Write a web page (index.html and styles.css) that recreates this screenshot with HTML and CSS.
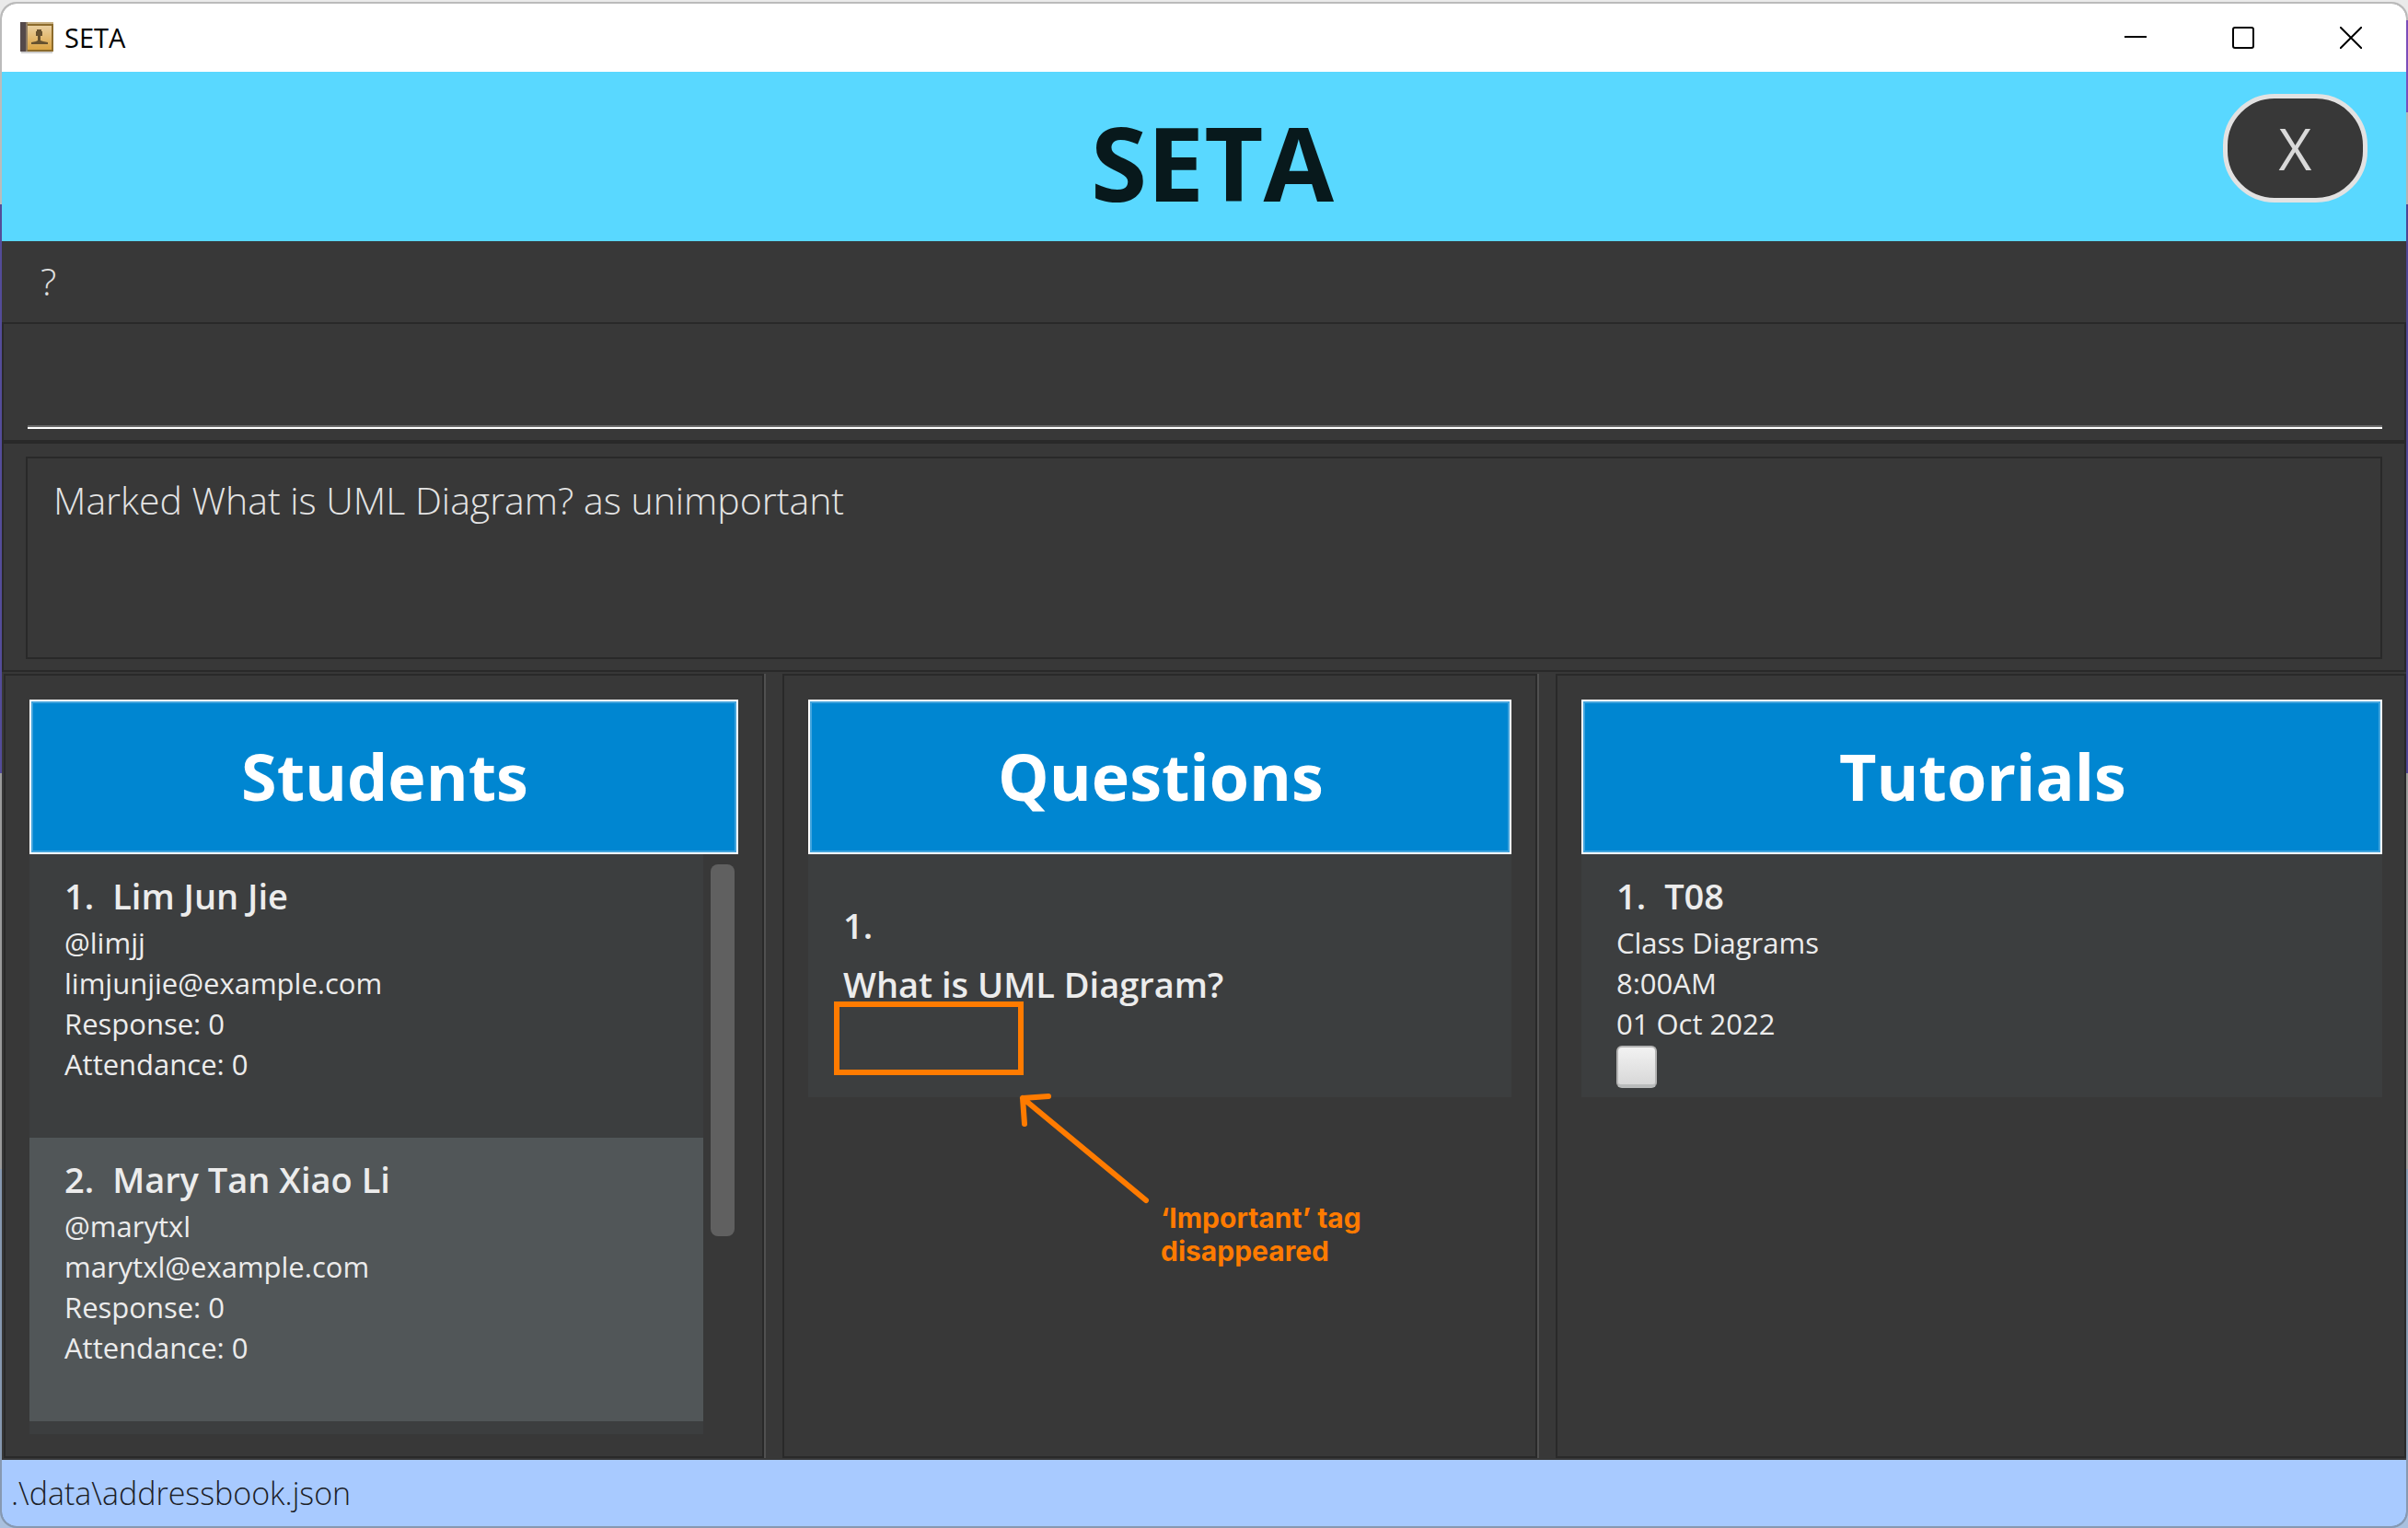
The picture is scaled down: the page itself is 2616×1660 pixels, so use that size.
FILE: index.html
```html
<!DOCTYPE html>
<html lang="en">
<head>
<meta charset="utf-8">
<title>SETA</title>
<link rel="stylesheet" href="styles.css">
</head>
<body>
<div class="window">
  <div class="titlebar">
    <svg class="app-icon" viewBox="0 0 36 34" aria-hidden="true">
      <defs>
        <linearGradient id="cover" x1="0" y1="0" x2="0" y2="1">
          <stop offset="0" stop-color="#e9cf9f"/>
          <stop offset="1" stop-color="#dba443"/>
        </linearGradient>
      </defs>
      <rect x="1" y="31" width="34" height="3" fill="#cfcfcf"/>
      <rect width="36" height="32" fill="#8c6b2c"/>
      <rect x="6" y="0" width="30" height="2" fill="#c9b183"/>
      <rect x="7" y="4" width="27" height="26" fill="url(#cover)"/>
      <rect width="6" height="32" fill="#54494a"/>
      <rect x="6" width="2" height="32" fill="#8c7a62"/>
      <path d="M18 8h5v2h1v5h-2v5l3 1 5 1v2H12v-2l5-1 2-1v-5h-2v-5h1z" fill="#66512f"/>
    </svg>
    <span class="app-name">SETA</span>
    <div class="window-controls">
      <button type="button" aria-label="Minimize"><svg viewBox="0 0 24 24"><path d="M0 11h24" stroke-width="2"/></svg></button>
      <button type="button" aria-label="Maximize"><svg viewBox="0 0 24 24"><rect x="1" y="1" width="22" height="22" rx="2" stroke-width="2"/></svg></button>
      <button type="button" aria-label="Close"><svg viewBox="0 0 24 24"><path d="M0 0l24 24M24 0L0 24" stroke-width="2"/></svg></button>
    </div>
  </div>

  <header class="banner">
    <h1>SETA</h1>
    <button type="button" class="exit">X</button>
  </header>

  <nav class="menubar"><button type="button">?</button></nav>

  <div class="command"><input type="text" aria-label="Command"></div>

  <div class="result"><output class="result-text">Marked What is UML Diagram? as unimportant</output></div>

  <main class="panels">
    <section class="panel">
      <h2>Students</h2>
      <div class="scroller">
        <ul class="list">
          <li class="card student">
            <h3><span>1.</span><span>Lim Jun Jie</span></h3>
            <p>@limjj</p>
            <p>limjunjie@example.com</p>
            <p>Response: 0</p>
            <p>Attendance: 0</p>
          </li>
          <li class="card student selected">
            <h3><span>2.</span><span>Mary Tan Xiao Li</span></h3>
            <p>@marytxl</p>
            <p>marytxl@example.com</p>
            <p>Response: 0</p>
            <p>Attendance: 0</p>
          </li>
          <li class="card next"></li>
        </ul>
        <div class="track"><div class="thumb"></div></div>
      </div>
    </section>

    <section class="panel">
      <h2>Questions</h2>
      <ul class="list">
        <li class="card question">
          <h3>1.</h3>
          <h3>What is UML Diagram?</h3>
          <div class="highlight"></div>
          <svg class="arrow" viewBox="0 0 148 126" aria-hidden="true">
            <path d="M141 118L7 7M35 5L7 7l2 28"/>
          </svg>
          <p class="note">‘Important’ tag<br>disappeared</p>
        </li>
      </ul>
    </section>

    <section class="panel">
      <h2>Tutorials</h2>
      <ul class="list">
        <li class="card tutorial">
          <h3><span>1.</span><span>T08</span></h3>
          <p>Class Diagrams</p>
          <p>8:00AM</p>
          <p>01 Oct 2022</p>
          <input type="checkbox" aria-label="Tutorial T08 done">
        </li>
      </ul>
    </section>
  </main>

  <footer class="status">.\data\addressbook.json</footer>
</div>
</body>
</html>
```
FILE: styles.css
```css
* { box-sizing: border-box; }

body {
  margin: 0;
  padding-top: 2px;
  min-height: 100vh;
  display: flex;
  font-family: "Open Sans", "Noto Sans", sans-serif;
  background:
    linear-gradient(#eaeaea 22px, #9a62e8 22px 122px, #e0e0e0 122px 222px, #6257b8 222px 840px, #c4c4c4 840px 1270px, #a9c0de 1270px) right / 50% 100% no-repeat,
    linear-gradient(#eaeaea 222px, #6a5fc0 222px 840px, #c4c4c4 840px 1270px, #a9c0de 1270px);
}

h1, h2, h3, p, ul { margin: 0; padding: 0; }
ul { list-style: none; }
button { font-family: inherit; cursor: pointer; }

.window {
  flex: 1;
  display: flex;
  flex-direction: column;
  border: 2px solid rgba(0, 0, 0, .2);
  border-radius: 18px;
  background: #383838;
  background-clip: padding-box;
  overflow: hidden;
}

.titlebar {
  display: flex;
  align-items: center;
  gap: 12px;
  height: 74px;
  padding: 0 2px 0 20px;
  background: #fff;
}
.app-icon { width: 36px; height: 34px; }
.app-name { font-size: 29px; line-height: 40px; color: #000; }
.window-controls { display: flex; margin-left: auto; }
.window-controls button {
  display: grid;
  place-items: center;
  width: 117px;
  height: 72px;
  padding: 0;
  border: 0;
  background: none;
}
.window-controls svg {
  width: 24px;
  height: 24px;
  fill: none;
  stroke: #000;
}

.banner {
  display: grid;
  grid-template-columns: 1fr auto 1fr;
  align-items: center;
  height: 184px;
  padding: 0 42px 0 60px;
  background: #59d8ff;
}
.banner h1 {
  grid-column: 2;
  padding-top: 12px;
  font-size: 111px;
  font-weight: 700;
  line-height: 150px;
  color: #08191c;
}
.exit {
  justify-self: end;
  width: 157px;
  height: 118px;
  margin-bottom: 18px;
  padding: 0;
  border: 5px solid #e2e2e2;
  border-radius: 56px;
  background: #383838;
  color: #d9d9d9;
  font-size: 62px;
  font-weight: 400;
  line-height: 84px;
}

.menubar { height: 88px; }
.menubar button {
  height: 86px;
  padding: 0 42px;
  border: 0;
  background: none;
  color: #e0e0e0;
  font-size: 41px;
  font-weight: 300;
}

.command, .result, .panel { border: 2px solid #292929; }

.command { padding: 12px 24px 12px 26px; }
.command input {
  display: block;
  width: 100%;
  height: 102px;
  padding: 0 8px;
  border: 0;
  border-bottom: 2px solid #fff;
  box-shadow: inset 0 -2px #6b6b6b;
  outline: 0;
  background: none;
  color: #fff;
  font: 300 41px/54px "Open Sans", sans-serif;
}

.result { padding: 14px 24px 12px; }
.result-text {
  display: block;
  height: 220px;
  padding: 18px 28px;
  border: 2px solid #292929;
  color: #e4e4e4;
  font-size: 41px;
  font-weight: 300;
  line-height: 54px;
}

.panels {
  flex: 1;
  display: grid;
  grid-template-columns: 826fr 820fr 924fr;
  gap: 20px;
  padding: 2px 0 2px 2px;
}
.panel {
  display: flex;
  flex-direction: column;
  min-width: 0;
  padding: 26px 26px 24px;
}
.panel:not(:last-child) { box-shadow: 2px 0 #505050; }
.panel:last-child { padding-right: 24px; }
.panel h2 {
  height: 168px;
  padding-left: 2px;
  border: 2px solid #fff;
  box-shadow: inset 0 0 0 2px #42a4dd;
  background: #0086d1;
  color: #fff;
  font-size: 70px;
  font-weight: 700;
  line-height: 162px;
  text-align: center;
}

.scroller { flex: 1; display: flex; }
.scroller .list { flex: 1; display: flex; flex-direction: column; }
.track { width: 38px; padding: 11px 4px 0 8px; }
.thumb { height: 404px; border-radius: 8px; background: #606060; }

.card {
  padding: 18px 38px 0;
  background: #3c3e3f;
  color: #ececec;
}
.card h3 {
  display: flex;
  gap: 20px;
  margin-bottom: 2px;
  font-size: 38px;
  font-weight: 600;
  line-height: 54px;
}
.card p { font-size: 31px; line-height: 44px; }
.student { height: 308px; }
.selected { background: #515658; }
.next { flex: 1; padding: 0; }

.question { position: relative; height: 264px; padding-top: 50px; }
.question h3 { margin-bottom: 10px; }
.tutorial { height: 264px; }
.tutorial input {
  appearance: none;
  display: block;
  width: 44px;
  height: 46px;
  margin: 2px 0;
  border: 2px solid #b4b4b4;
  border-bottom: 4px solid #b9bbbb;
  border-radius: 6px;
  background: linear-gradient(#f2f2f2, #d8d8d8);
}

/* Callout drawn over the question card */
.highlight {
  position: absolute;
  left: 28px;
  top: 160px;
  width: 206px;
  height: 80px;
  border: 6px solid #ff7b00;
}
.arrow {
  position: absolute;
  left: 226px;
  top: 258px;
  width: 148px;
  height: 126px;
  fill: none;
  stroke: #ff7b00;
  stroke-width: 6;
  stroke-linecap: round;
  stroke-linejoin: round;
}
.card .note {
  position: absolute;
  left: 383px;
  top: 377px;
  color: #ff7b00;
  font: 700 30px/36px Inter, sans-serif;
  white-space: nowrap;
}

.status {
  height: 72px;
  padding-left: 10px;
  background: #a8caff;
  color: #1c2127;
  font-size: 34px;
  font-weight: 300;
  line-height: 72px;
}
```
